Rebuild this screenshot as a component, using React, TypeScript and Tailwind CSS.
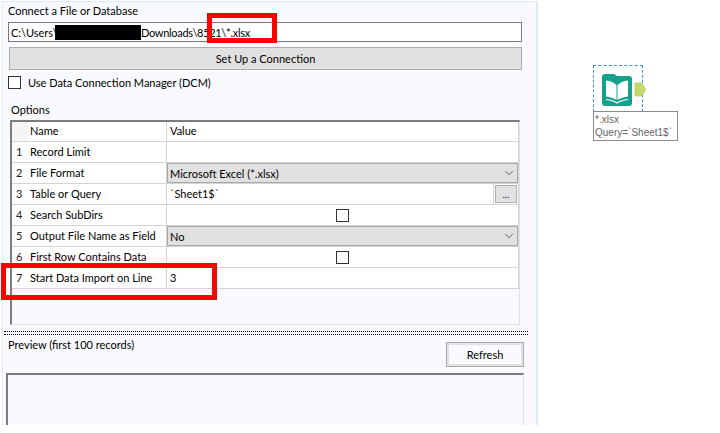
import React from 'react';
import { ChevronDown } from 'lucide-react';

const rows = ['Record Limit', 'File Format', 'Table or Query', 'Search SubDirs', 'Output File Name as Field', 'First Row Contains Data', 'Start Data Import on Line'];

const Check = () => <div className="w-[13px] h-[13px] border border-[#333] bg-white" />;

const Dropdown = ({ label }: { label: string }) => (
  <div className="flex-1 h-full flex items-center justify-between pl-[3px] pr-[1px] bg-[#e1e1e1] border border-[#a9a9a9]">
    <span className="ml-[-1px]">{label}</span>
    <ChevronDown size={14} strokeWidth={1.25} className="text-[#333]" />
  </div>
);

const rowValue = (i: number) => {
  if (i === 1) return <Dropdown label="Microsoft Excel (*.xlsx)" />;
  if (i === 2)
    return (
      <div className="flex-1 h-full flex items-center justify-between pl-[3px]">
        <span className="mb-[2px]">`Sheet1$`</span>
        <div className="h-full pl-[1px] pr-[1px] flex items-center border-l border-[#d4d4d4]">
          <div className="w-[22px] h-[18px] flex items-center justify-center bg-[#e1e1e1] border border-[#adadad] text-[10px] text-[#500050]">...</div>
        </div>
      </div>
    );
  if (i === 3 || i === 5)
    return (
      <div className="flex-1 flex justify-center pr-[1px]">
        <Check />
      </div>
    );
  if (i === 4) return <Dropdown label="No" />;
  if (i === 6) return <span className="pl-[3px] mb-[2px]">3</span>;
  return null;
};

const App = () => {
  return (
    <div className="relative w-[720px] h-[433px] overflow-hidden bg-white text-[11px] leading-none text-black font-['Lato','Liberation_Sans',sans-serif]">
      <div className="w-[533px] h-[423px] ml-[2px] mt-[1px] flex flex-col bg-[#f9fafd] border-l border-t border-[#dfe8f3] box-content border-r-2 border-r-[#e0e7f5]">
        <div className="pl-[5px] pt-[3px] h-[20px]">Connect a File or Database</div>
        <div className="ml-[5px] w-[514px] h-[20px] flex items-center pl-[2px] bg-white border border-[#7a7a7a]">C:\Users\</div>
        <div className="ml-[6px] mt-[5px] w-[513px] h-[23px] flex items-center justify-center bg-[#e1e1e1] border border-[#adadad]">Set Up a Connection</div>
        <div className="ml-[5px] mt-[6px] flex items-center gap-[7px]">
          <div className="w-[13px] h-[13px] border border-[#333] bg-white" />
          <span>Use Data Connection Manager (DCM)</span>
        </div>
        <div className="ml-[8px] mt-[16px] h-[9px] flex items-center">Options</div>
        {/* options grid */}
        <div className="ml-[7px] mt-[6px] w-[510px] h-[205px] border-l-2 border-t-2 border-l-[#7d7d7d] border-t-[#7d7d7d] border-b border-b-[#e0e0e0] border-r border-r-[#e0e0e0]">
          <div className="bg-white border-r border-r-[#d4d4d4]">
            <div className="h-[20px] flex items-center border-b border-[#d4d4d4]">
              <div className="w-[16px] h-full bg-[#f5f5f5]" />
              <div className="w-[139px] pl-[2px] pb-[2px] h-full flex items-center border-r border-[#d4d4d4]">Name</div>
              <div className="pl-[3px] mb-[2px]">Value</div>
            </div>
            {rows.map((name, i) => (
              <div key={name} className="h-[21px] flex items-center border-b border-[#d4d4d4]">
                <div className="w-[16px] pl-[4px] mb-[2px] text-[#222]">{i + 1}</div>
                <div className="w-[139px] pl-[2px] pb-[2px] h-full flex items-center border-r border-[#d4d4d4] whitespace-nowrap">{name}</div>
                {rowValue(i)}
              </div>
            ))}
          </div>
        </div>
        {/* splitter */}
        <div className="ml-[1px] mt-[6px] w-[524px] h-[4px] border-y border-dotted border-black" />
        <div className="flex justify-between items-start">
          <div className="pl-[5px] pt-[4px]">Preview (first 100 records)</div>
          <div className="mt-[7px] mr-[12px] w-[78px] h-[25px] flex items-center justify-center border border-[#adadad] bg-[#f9fafd] outline-2 -outline-offset-3 outline-[#e1e1e1]">Refresh</div>
        </div>
        <div className="ml-[3px] mt-[6px] w-[518px] flex-1 border-l-2 border-t-2 border-l-[#7d7d7d] border-t-[#7d7d7d] border-r border-r-[#e0e0e0]" />
      </div>

      {/* redaction + annotations */}
      <div className="absolute left-[55px] top-[25px] w-[86px] h-[15px] bg-black" />
      <div className="absolute left-[141px] top-[24px] h-[17px] flex items-center whitespace-nowrap tracking-[-0.3px]">Downloads\8521\*.xlsx</div>
      <div className="absolute left-[207px] top-[13px] w-[70px] h-[30px] border-[5px] border-[#f00]" />
      <div className="absolute left-[1px] top-[263px] w-[216px] h-[37px] border-[5px] border-[#f00]" />

      {/* canvas tool */}
      <div className="absolute left-[593px] top-[65px] w-[50px] h-[47px] border border-dashed border-[#3b8fe0]" />
      <svg className="absolute left-[602px] top-[74px]" width="44" height="32" viewBox="0 0 44 32">
        <path d="M0 3a3 3 0 0 1 3-3h9l3 2h12a3 3 0 0 1 3 3v24a3 3 0 0 1-3 3H3a3 3 0 0 1-3-3z" fill="#17a08c" />
        <path d="M14.500 11c-3-2.500-6-4-10.500-4.500v16c4 .5 7.500 1.500 10.500 3.500zM15.500 11c3-2.500 6-4 10.500-4.500v16c-4 .5-7.500 1.500-10.500 3.500z" fill="#fff" />
        <path d="M4 25.500c4 .5 8 1.500 11 3.500 3-2 7-3 11-3.500" fill="none" stroke="#fff" strokeWidth="1.2" />
        <path d="M33 9h7l3.500 6.500-3.500 6.500h-7z" fill="#c4db6c" stroke="#a8c24e" strokeWidth="0.6" />
      </svg>
      <div className="absolute left-[593px] top-[111px] w-[85px] h-[30px] pl-[1px] pt-[1px] bg-white border border-[#8c8c8c] text-[10px] leading-[13px] text-[#666] font-['Liberation_Sans',sans-serif]">
        <div>*.xlsx</div>
        <div className="whitespace-nowrap">Query=`Sheet1$`</div>
      </div>
    </div>
  );
};

export default App;
